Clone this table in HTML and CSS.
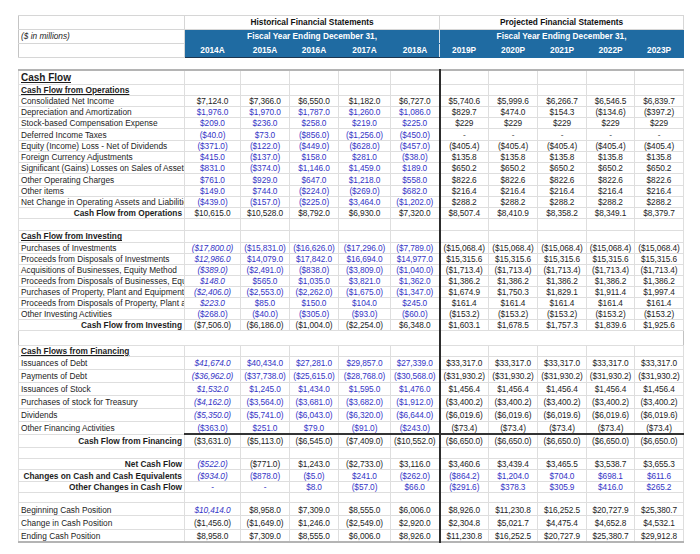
FILE: index.html
```html
<!DOCTYPE html>
<html>
<head>
<meta charset="utf-8">
<title>Cash Flow</title>
<link rel="stylesheet" href="styles.css">
</head>
<body>
<div class="sheet">
<table class="head">
<colgroup><col class="c-label"><col class="c-14"><col class="c-h"><col class="c-h"><col class="c-17"><col class="c-h"><col class="c-p"><col class="c-p"><col class="c-p"><col class="c-p4"><col class="c-p"></colgroup>
<tr><td class="lab"></td><td colspan="5" class="title">Historical Financial Statements</td><td colspan="5" class="title">Projected Financial Statements</td></tr>
<tr><td class="lab units">($ in millions)</td><td colspan="5" class="band hend">Fiscal Year Ending December 31,</td><td colspan="5" class="band">Fiscal Year Ending December 31,</td></tr>
<tr><td class="lab"></td><td class="band hist">2014A</td><td class="band hist">2015A</td><td class="band hist">2016A</td><td class="band hist">2017A</td><td class="band hist hend">2018A</td><td class="band">2019P</td><td class="band">2020P</td><td class="band">2021P</td><td class="band">2022P</td><td class="band">2023P</td></tr>
</table>

<table class="main">
<colgroup><col class="c-label"><col class="c-14"><col class="c-h"><col class="c-h"><col class="c-17"><col class="c-h"><col class="c-p"><col class="c-p"><col class="c-p"><col class="c-p4"><col class="c-p"></colgroup>
<tr class="r14"><td class="l big">Cash Flow</td><td></td><td></td><td></td><td></td><td></td><td></td><td></td><td></td><td></td><td></td></tr>
<tr class="r11"><td class="l sec">Cash Flow from Operations</td><td></td><td></td><td></td><td></td><td></td><td></td><td></td><td></td><td></td><td></td></tr>
<tr class="r115"><td class="l">Consolidated Net Income</td><td>$7,124.0</td><td>$7,366.0</td><td>$6,550.0</td><td>$1,182.0</td><td>$6,727.0</td><td>$5,740.6</td><td>$5,999.6</td><td>$6,266.7</td><td>$6,546.5</td><td>$6,839.7</td></tr>
<tr class="r115 hb"><td class="l">Depreciation and Amortization</td><td>$1,976.0</td><td>$1,970.0</td><td>$1,787.0</td><td>$1,260.0</td><td>$1,086.0</td><td>$829.7</td><td>$474.0</td><td>$154.3</td><td>($134.6)</td><td>($397.2)</td></tr>
<tr class="r115 hb"><td class="l">Stock-based Compensation Expense</td><td>$209.0</td><td>$236.0</td><td>$258.0</td><td>$219.0</td><td>$225.0</td><td>$229</td><td>$229</td><td>$229</td><td>$229</td><td>$229</td></tr>
<tr class="r115 hb"><td class="l">Deferred Income Taxes</td><td>($40.0)</td><td>$73.0</td><td>($856.0)</td><td>($1,256.0)</td><td>($450.0)</td><td class="dash">-</td><td class="dash">-</td><td class="dash">-</td><td class="dash">-</td><td class="dash">-</td></tr>
<tr class="r115 hb"><td class="l">Equity (Income) Loss - Net of Dividends</td><td>($371.0)</td><td>($122.0)</td><td>($449.0)</td><td>($628.0)</td><td>($457.0)</td><td>($405.4)</td><td>($405.4)</td><td>($405.4)</td><td>($405.4)</td><td>($405.4)</td></tr>
<tr class="r115 hb"><td class="l">Foreign Currency Adjustments</td><td>$415.0</td><td>($137.0)</td><td>$158.0</td><td>$281.0</td><td>($38.0)</td><td>$135.8</td><td>$135.8</td><td>$135.8</td><td>$135.8</td><td>$135.8</td></tr>
<tr class="r115 hb"><td class="l">Significant (Gains) Losses on Sales of Assets</td><td>$831.0</td><td>($374.0)</td><td>$1,146.0</td><td>$1,459.0</td><td>$189.0</td><td>$650.2</td><td>$650.2</td><td>$650.2</td><td>$650.2</td><td>$650.2</td></tr>
<tr class="r115 hb"><td class="l">Other Operating Charges</td><td>$761.0</td><td>$929.0</td><td>$647.0</td><td>$1,218.0</td><td>$558.0</td><td>$822.6</td><td>$822.6</td><td>$822.6</td><td>$822.6</td><td>$822.6</td></tr>
<tr class="r115 hb"><td class="l">Other items</td><td>$149.0</td><td>$744.0</td><td>($224.0)</td><td>($269.0)</td><td>$682.0</td><td>$216.4</td><td>$216.4</td><td>$216.4</td><td>$216.4</td><td>$216.4</td></tr>
<tr class="r115 hb"><td class="l">Net Change in Operating Assets and Liabilities</td><td>($439.0)</td><td>($157.0)</td><td>($225.0)</td><td>$3,464.0</td><td>($1,202.0)</td><td>$288.2</td><td>$288.2</td><td>$288.2</td><td>$288.2</td><td>$288.2</td></tr>
<tr class="r115 tot"><td class="lt">Cash Flow from Operations</td><td>$10,615.0</td><td>$10,528.0</td><td>$8,792.0</td><td>$6,930.0</td><td>$7,320.0</td><td>$8,507.4</td><td>$8,410.9</td><td>$8,358.2</td><td>$8,349.1</td><td>$8,379.7</td></tr>
<tr class="r115"><td></td><td></td><td></td><td></td><td></td><td></td><td></td><td></td><td></td><td></td><td></td></tr>

<tr class="r12"><td class="l sec">Cash Flow from Investing</td><td></td><td></td><td></td><td></td><td></td><td></td><td></td><td></td><td></td><td></td></tr>
<tr class="r11 hb i1"><td class="l">Purchases of Investments</td><td>($17,800.0)</td><td>($15,831.0)</td><td>($16,626.0)</td><td>($17,296.0)</td><td>($7,789.0)</td><td>($15,068.4)</td><td>($15,068.4)</td><td>($15,068.4)</td><td>($15,068.4)</td><td>($15,068.4)</td></tr>
<tr class="r11 hb i1"><td class="l">Proceeds from Disposals of Investments</td><td>$12,986.0</td><td>$14,079.0</td><td>$17,842.0</td><td>$16,694.0</td><td>$14,977.0</td><td>$15,315.6</td><td>$15,315.6</td><td>$15,315.6</td><td>$15,315.6</td><td>$15,315.6</td></tr>
<tr class="r11 hb i1"><td class="l">Acquisitions of Businesses, Equity Method</td><td>($389.0)</td><td>($2,491.0)</td><td>($838.0)</td><td>($3,809.0)</td><td>($1,040.0)</td><td>($1,713.4)</td><td>($1,713.4)</td><td>($1,713.4)</td><td>($1,713.4)</td><td>($1,713.4)</td></tr>
<tr class="r11 hb i1"><td class="l">Proceeds from Disposals of Businesses, Equity Method</td><td>$148.0</td><td>$565.0</td><td>$1,035.0</td><td>$3,821.0</td><td>$1,362.0</td><td>$1,386.2</td><td>$1,386.2</td><td>$1,386.2</td><td>$1,386.2</td><td>$1,386.2</td></tr>
<tr class="r11 hb i1"><td class="l">Purchases of Property, Plant and Equipment</td><td>($2,406.0)</td><td>($2,553.0)</td><td>($2,262.0)</td><td>($1,675.0)</td><td>($1,347.0)</td><td>$1,674.9</td><td>$1,750.3</td><td>$1,829.1</td><td>$1,911.4</td><td>$1,997.4</td></tr>
<tr class="r11 hb i1"><td class="l">Proceeds from Disposals of Property, Plant and Equipment</td><td>$223.0</td><td>$85.0</td><td>$150.0</td><td>$104.0</td><td>$245.0</td><td>$161.4</td><td>$161.4</td><td>$161.4</td><td>$161.4</td><td>$161.4</td></tr>
<tr class="r11 hb"><td class="l">Other Investing Activities</td><td>($268.0)</td><td>($40.0)</td><td>($305.0)</td><td>($93.0)</td><td>($60.0)</td><td>($153.2)</td><td>($153.2)</td><td>($153.2)</td><td>($153.2)</td><td>($153.2)</td></tr>
<tr class="r11 tot"><td class="lt">Cash Flow from Investing</td><td>($7,506.0)</td><td>($6,186.0)</td><td>($1,004.0)</td><td>($2,254.0)</td><td>$6,348.0</td><td>$1,603.1</td><td>$1,678.5</td><td>$1,757.3</td><td>$1,839.6</td><td>$1,925.6</td></tr>
<tr class="r15 gap"><td></td><td></td><td></td><td></td><td></td><td></td><td></td><td></td><td></td><td></td><td></td></tr>

<tr class="r115 blk"><td class="l sec">Cash Flows from Financing</td><td></td><td></td><td></td><td></td><td></td><td></td><td></td><td></td><td></td><td></td></tr>
<tr class="r13 hb i1"><td class="l">Issuances of Debt</td><td>$41,674.0</td><td>$40,434.0</td><td>$27,281.0</td><td>$29,857.0</td><td>$27,339.0</td><td>$33,317.0</td><td>$33,317.0</td><td>$33,317.0</td><td>$33,317.0</td><td>$33,317.0</td></tr>
<tr class="r13 hb i1"><td class="l">Payments of Debt</td><td>($36,962.0)</td><td>($37,738.0)</td><td>($25,615.0)</td><td>($28,768.0)</td><td>($30,568.0)</td><td>($31,930.2)</td><td>($31,930.2)</td><td>($31,930.2)</td><td>($31,930.2)</td><td>($31,930.2)</td></tr>
<tr class="r13 hb i1"><td class="l">Issuances of Stock</td><td>$1,532.0</td><td>$1,245.0</td><td>$1,434.0</td><td>$1,595.0</td><td>$1,476.0</td><td>$1,456.4</td><td>$1,456.4</td><td>$1,456.4</td><td>$1,456.4</td><td>$1,456.4</td></tr>
<tr class="r13 hb i1"><td class="l">Purchases of stock for Treasury</td><td>($4,162.0)</td><td>($3,564.0)</td><td>($3,681.0)</td><td>($3,682.0)</td><td>($1,912.0)</td><td>($3,400.2)</td><td>($3,400.2)</td><td>($3,400.2)</td><td>($3,400.2)</td><td>($3,400.2)</td></tr>
<tr class="r13 hb i1"><td class="l">Dividends</td><td>($5,350.0)</td><td>($5,741.0)</td><td>($6,043.0)</td><td>($6,320.0)</td><td>($6,644.0)</td><td>($6,019.6)</td><td>($6,019.6)</td><td>($6,019.6)</td><td>($6,019.6)</td><td>($6,019.6)</td></tr>
<tr class="r13 hb"><td class="l">Other Financing Activities</td><td>($363.0)</td><td>$251.0</td><td>$79.0</td><td>($91.0)</td><td>($243.0)</td><td>($73.4)</td><td>($73.4)</td><td>($73.4)</td><td>($73.4)</td><td>($73.4)</td></tr>
<tr class="r13 tot dbl"><td class="lt">Cash Flow from Financing</td><td>($3,631.0)</td><td>($5,113.0)</td><td>($6,545.0)</td><td>($7,409.0)</td><td>($10,552.0)</td><td>($6,650.0)</td><td>($6,650.0)</td><td>($6,650.0)</td><td>($6,650.0)</td><td>($6,650.0)</td></tr>
<tr class="r115"><td></td><td></td><td></td><td></td><td></td><td></td><td></td><td></td><td></td><td></td><td></td></tr>

<tr class="r115 i1"><td class="lt">Net Cash Flow</td><td>($522.0)</td><td>($771.0)</td><td>$1,243.0</td><td>($2,733.0)</td><td>$3,116.0</td><td>$3,460.6</td><td>$3,439.4</td><td>$3,465.5</td><td>$3,538.7</td><td>$3,655.3</td></tr>
<tr class="r115 hb i1 pb"><td class="lt">Changes on Cash and Cash Equivalents</td><td>($934.0)</td><td>($878.0)</td><td>($5.0)</td><td>$241.0</td><td>($262.0)</td><td>($864.2)</td><td>$1,204.0</td><td>$704.0</td><td>$698.1</td><td>$611.6</td></tr>
<tr class="r115 hb pb"><td class="lt">Other Changes in Cash Flow</td><td class="dash">-</td><td class="dash">-</td><td>$8.0</td><td>($57.0)</td><td>$66.0</td><td>($291.6)</td><td>$378.3</td><td>$305.9</td><td>$416.0</td><td>$265.2</td></tr>
<tr class="r105"><td></td><td></td><td></td><td></td><td></td><td></td><td></td><td></td><td></td><td></td><td></td></tr>

<tr class="r133 i1"><td class="l">Beginning Cash Position</td><td>$10,414.0</td><td>$8,958.0</td><td>$7,309.0</td><td>$8,555.0</td><td>$6,006.0</td><td>$8,926.0</td><td>$11,230.8</td><td>$16,252.5</td><td>$20,727.9</td><td>$25,380.7</td></tr>
<tr class="r133"><td class="l">Change in Cash Position</td><td>($1,456.0)</td><td>($1,649.0)</td><td>$1,246.0</td><td>($2,549.0)</td><td>$2,920.0</td><td>$2,304.8</td><td>$5,021.7</td><td>$4,475.4</td><td>$4,652.8</td><td>$4,532.1</td></tr>
<tr class="r134 tot"><td class="l">Ending Cash Position</td><td>$8,958.0</td><td>$7,309.0</td><td>$8,555.0</td><td>$6,006.0</td><td>$8,926.0</td><td>$11,230.8</td><td>$16,252.5</td><td>$20,727.9</td><td>$25,380.7</td><td>$29,912.8</td></tr>
</table>
</div>
</body>
</html>
```

FILE: styles.css
```css
* { box-sizing: border-box; }

body {
  margin: 0;
  background: #ffffff;
  font-family: "Liberation Sans", Arial, sans-serif;
  color: #1c1c1c;
}

.sheet {
  padding: 15px 0 0 18px;
  width: 700px;
}

table {
  border-collapse: collapse;
  table-layout: fixed;
  width: 665px;
  font-size: 8.3px;
}

col.c-label { width: 166px; }
col.c-14 { width: 56px; }
col.c-h { width: 49px; }
col.c-17 { width: 52px; }
col.c-p { width: 49px; }
col.c-p4 { width: 48px; }

td {
  padding: 0;
  white-space: nowrap;
  overflow: hidden;
  line-height: 1;
  vertical-align: middle;
}

/* ---------- header ---------- */
.head tr { height: 14px; }

.head td {
  border: 1px solid #d6d6d6;
  text-align: center;
}

.head .lab {
  text-align: left;
  padding-left: 2px;
  border-left-color: #c4c4c4;
}

.head .units { font-style: italic; }

.head .title {
  font-weight: bold;
  color: #111;
}

.head .band {
  background: #1f6ba2;
  color: #ffffff;
  font-weight: bold;
  border-color: #1f6ba2;
}

.head .band.hist { border-bottom: 1px solid #1b3550; }
.head .band.hend { border-right: 1px solid #d8e4ee; }

/* ---------- main grid ---------- */
.main {
  margin-top: 11px;
  border-top: 2px solid #b4b4b4;
  border-bottom: 2px solid #b4b4b4;
  border-left: 1px solid #c2c2c2;
  border-right: 1px solid #c2c2c2;
}

.main td {
  border: 1px solid #dedede;
  text-align: center;
  padding-top: 1px;
}

.main td:nth-child(n+2) { letter-spacing: -0.1px; }

.main td:nth-child(7) { border-left: 2px solid #2c2c2c; }

.main td.l {
  text-align: left;
  padding-left: 2px;
}

.main td.lt {
  text-align: right;
  padding-right: 2px;
  font-weight: bold;
}

.main td.big {
  font-size: 10px;
  font-weight: bold;
  text-decoration: underline;
}

.main td.sec {
  font-weight: bold;
  text-decoration: underline;
}

.main td.dash { color: #555; }

/* row heights */
.r14 { height: 14px; }
.r11 { height: 11px; }
.r115 { height: 11.25px; }
.r12 { height: 12px; }
.r13 { height: 13px; }
.r105 { height: 10.5px; }
.r133 { height: 13.2px; }
.r134 { height: 13.2px; }
.r15 { height: 15px; }

/* blank band between blocks */
.gap td {
  border-left: none;
  border-right: none;
}
.gap td:nth-child(7) { border-left: 2px solid #2c2c2c; }

.blk td { border-top: 1px solid #c4c4c4; }

/* input colours */
.hb td:nth-child(n+2):nth-child(-n+6) { color: #3434c6; }
.i1 td:nth-child(2) { color: #3434c6; font-style: italic; }
.pb td:nth-child(n+7) { color: #3434c6; }

/* totals */
.tot td:nth-child(n+2) { border-top: 1px solid #333333; }
.dbl td:nth-child(n+2) { border-top: 2px solid #333333; }
```
